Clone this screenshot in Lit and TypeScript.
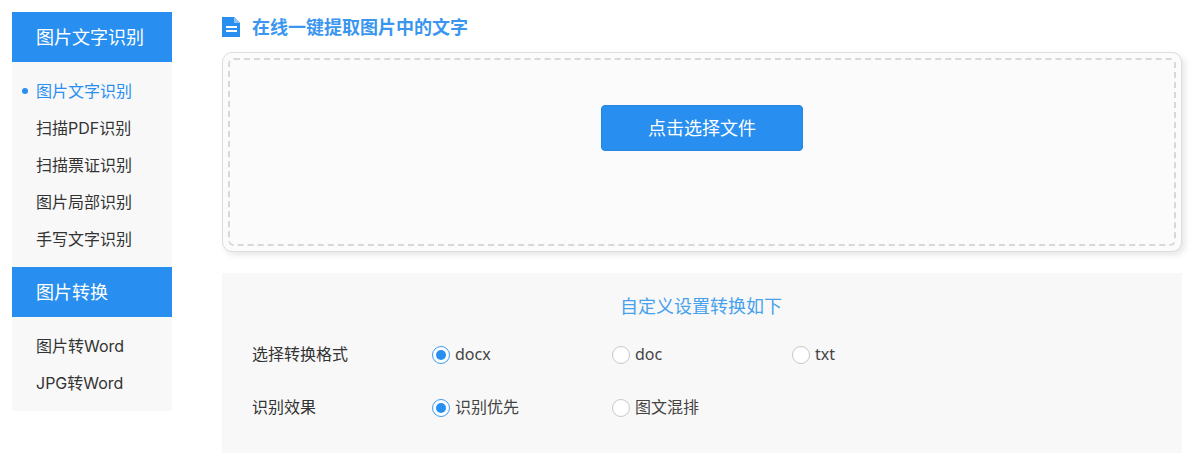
import { LitElement, html, css } from "lit";
import { customElement } from "lit/decorators.js";

@customElement("app-root")
export class AppRoot extends LitElement {
  static styles = css`
    :host {
      display: block;
      width: 1200px;
      height: 460px;
      background: #fff;
      overflow: hidden;
      font-family: "Noto Sans", "Noto Sans CJK SC", sans-serif;
      color: #333;
    }
    .page { display: flex; gap: 50px; padding: 12px 18px 0 12px; align-items: flex-start; }
    .side { width: 160px; flex: none; }
    .head {
      height: 50px; line-height: 50px; background: #288ff0; color: #fff;
      font-size: 18px; padding-left: 24px;
    }
    .list { background: #f8f8f8; padding: 10px 0; }
    .item { height: 37px; line-height: 39px; font-size: 16px; padding-left: 24px; color: #333; position: relative; white-space: nowrap; font-family: Inter, "Noto Sans CJK SC", sans-serif; }
    .item.on { color: #288ff0; }
    .item.on::before {
      content: ""; position: absolute; left: 10px; top: 16px; width: 6px; height: 6px;
      border-radius: 50%; background: #288ff0;
    }
    .main { width: 960px; flex: none; }
    .title { display: flex; align-items: center; gap: 11px; height: 28px; margin-bottom: 12px; color: #3a96ee; font-size: 18px; font-weight: 700; }
    .title svg { display: block; margin-top: 2px; }
    .box {
      box-sizing: border-box; height: 200px; padding: 5px; background: #fbfbfb;
      border: 1px solid #ddd; border-radius: 10px; box-shadow: 3px 3px 6px rgba(0,0,0,0.1);
    }
    .dash {
      box-sizing: border-box; height: 100%; border: 2px dashed #d8d8d8; border-radius: 6px;
      display: flex; justify-content: center; align-items: flex-start; padding-top: 45px;
    }
    .btn {
      width: 202px; height: 46px; box-sizing: border-box; background: #288ff0; border: 1px solid #2484de;
      border-radius: 4px; color: #fff; font-size: 18px; text-align: center; line-height: 44px;
    }
    .settings { margin-top: 21px; height: 180px; background: #f8f8f8; padding: 0 30px; box-sizing: border-box; }
    .stitle { text-align: center; color: #47a1ec; font-size: 18px; height: 70px; line-height: 66px; padding-right: 2px; }
    .row { display: flex; align-items: center; height: 24px; margin-bottom: 29px; font-size: 16px; }
    .label { width: 180px; flex: none; font-size: 16px; line-height: 22px; margin-bottom: 2px; }
    .opt { width: 180px; flex: none; display: flex; align-items: center; gap: 5px; color: #444; }
    .opt span:last-child { line-height: 22px; margin-bottom: 2px; }
    .radio { width: 18px; height: 18px; box-sizing: border-box; border-radius: 50%; border: 1px solid #c8c8c8; background: #fff; flex: none; display: flex; align-items: center; justify-content: center; }
    .opt.on .radio { border-color: #3f9bf0; }
    .opt.on .radio::after { content: ""; width: 10px; height: 10px; border-radius: 50%; background: #288ff0; }
  `;

  private opt(label: string, on = false) {
    return html`<div class="opt ${on ? "on" : ""}"><span class="radio"></span><span>${label}</span></div>`;
  }

  render() {
    return html`<div class="page">
      <div class="side">
        <div class="head">图片文字识别</div>
        <div class="list">
          <div class="item on">图片文字识别</div>
          <div class="item">扫描PDF识别</div>
          <div class="item">扫描票证识别</div>
          <div class="item">图片局部识别</div>
          <div class="item">手写文字识别</div>
        </div>
        <div class="head">图片转换</div>
        <div class="list">
          <div class="item">图片转Word</div>
          <div class="item">JPG转Word</div>
        </div>
      </div>
      <div class="main">
        <div class="title">
          <svg width="19" height="20" viewBox="0 0 19 20">
            <path d="M0 0H12L18 6V20H0Z" fill="#288ff0"/>
            <path d="M12 0L18 6H12Z" fill="#8cc4f6"/>
            <rect x="4" y="9" width="11" height="2" fill="#fff"/>
            <rect x="4" y="13" width="11" height="2" fill="#fff"/>
          </svg>
          <span>在线一键提取图片中的文字</span>
        </div>
        <div class="box"><div class="dash"><div class="btn">点击选择文件</div></div></div>
        <div class="settings">
          <div class="stitle">自定义设置转换如下</div>
          <div class="row"><div class="label">选择转换格式</div>${this.opt("docx", true)}${this.opt("doc")}${this.opt("txt")}</div>
          <div class="row"><div class="label">识别效果</div>${this.opt("识别优先", true)}${this.opt("图文混排")}</div>
        </div>
      </div>
    </div>`;
  }
}
